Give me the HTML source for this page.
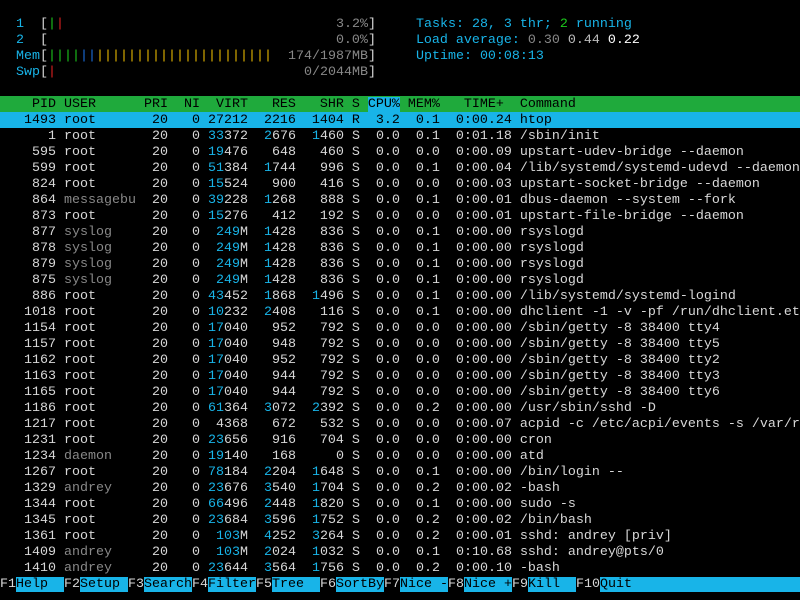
<!DOCTYPE html>
<html><head><meta charset="utf-8"><style>
html,body{margin:0;padding:0;background:#000;width:800px;height:600px;overflow:hidden}
pre{margin:0;font-family:"Liberation Mono","DejaVu Sans Mono",monospace;font-size:13.33px;line-height:16px;color:#d8d8d8;white-space:pre}
.l{height:16px;width:800px;overflow:hidden;padding-top:1px;box-sizing:border-box;line-height:16px}
.c{color:#18b4e8}.g{color:#1cc81c}.r{color:#e02020}.y{color:#e8b800}.b{color:#1a6ee0}.d{color:#888}.w{color:#fff}.m{color:#bdbdbd}
.hd{background:#1faa3c;color:#000}
.hd .s{background:#18b4e8}
.sel{background:#18b4e8;color:#000}
.ft{color:#d8d8d8}.ft span{background:#18b4e8;color:#000}
</style></head><body><pre>
<div class="l"></div><div class="l">  <span class="c">1</span>  [<span class="g">|</span><span class="r">|</span>                                  <span class="d">3.2%</span>]     <span class="c">Tasks: 28, 3 thr; </span><span class="g">2</span><span class="c"> running</span></div><div class="l">  <span class="c">2</span>  [                                    <span class="d">0.0%</span>]     <span class="c">Load average: </span><span class="d">0.30 </span><span class="m">0.44 </span><span class="w">0.22</span></div><div class="l">  <span class="c">Mem</span>[<span class="g">||||</span><span class="b">||</span><span class="y">||||||||||||||||||||||</span>  <span class="d">174/1987MB</span>]     <span class="c">Uptime: 00:08:13</span></div><div class="l">  <span class="c">Swp</span>[<span class="r">|</span>                               <span class="d">0/2044MB</span>]</div><div class="l"></div><div class="l hd">    PID USER      PRI  NI  VIRT   RES   SHR S <span class="s">CPU%</span> MEM%   TIME+  Command                                     </div><div class="l sel">   1493 root       20   0 27212  2216  1404 R  3.2  0.1  0:00.24 htop                                       </div><div class="l">      1 root       20   0 <span class="c">33</span>372  <span class="c">2</span>676  <span class="c">1</span>460 S  0.0  0.1  0:01.18 /sbin/init</div><div class="l">    595 root       20   0 <span class="c">19</span>476   648   460 S  0.0  0.0  0:00.09 upstart-udev-bridge --daemon</div><div class="l">    599 root       20   0 <span class="c">51</span>384  <span class="c">1</span>744   996 S  0.0  0.1  0:00.04 /lib/systemd/systemd-udevd --daemon</div><div class="l">    824 root       20   0 <span class="c">15</span>524   900   416 S  0.0  0.0  0:00.03 upstart-socket-bridge --daemon</div><div class="l">    864 <span class="d">messagebu</span>  20   0 <span class="c">39</span>228  <span class="c">1</span>268   888 S  0.0  0.1  0:00.01 dbus-daemon --system --fork</div><div class="l">    873 root       20   0 <span class="c">15</span>276   412   192 S  0.0  0.0  0:00.01 upstart-file-bridge --daemon</div><div class="l">    877 <span class="d">syslog</span>     20   0  <span class="c">249</span>M  <span class="c">1</span>428   836 S  0.0  0.1  0:00.00 rsyslogd</div><div class="l">    878 <span class="d">syslog</span>     20   0  <span class="c">249</span>M  <span class="c">1</span>428   836 S  0.0  0.1  0:00.00 rsyslogd</div><div class="l">    879 <span class="d">syslog</span>     20   0  <span class="c">249</span>M  <span class="c">1</span>428   836 S  0.0  0.1  0:00.00 rsyslogd</div><div class="l">    875 <span class="d">syslog</span>     20   0  <span class="c">249</span>M  <span class="c">1</span>428   836 S  0.0  0.1  0:00.00 rsyslogd</div><div class="l">    886 root       20   0 <span class="c">43</span>452  <span class="c">1</span>868  <span class="c">1</span>496 S  0.0  0.1  0:00.00 /lib/systemd/systemd-logind</div><div class="l">   1018 root       20   0 <span class="c">10</span>232  <span class="c">2</span>408   116 S  0.0  0.1  0:00.00 dhclient -1 -v -pf /run/dhclient.eth0.pid</div><div class="l">   1154 root       20   0 <span class="c">17</span>040   952   792 S  0.0  0.0  0:00.00 /sbin/getty -8 38400 tty4</div><div class="l">   1157 root       20   0 <span class="c">17</span>040   948   792 S  0.0  0.0  0:00.00 /sbin/getty -8 38400 tty5</div><div class="l">   1162 root       20   0 <span class="c">17</span>040   952   792 S  0.0  0.0  0:00.00 /sbin/getty -8 38400 tty2</div><div class="l">   1163 root       20   0 <span class="c">17</span>040   944   792 S  0.0  0.0  0:00.00 /sbin/getty -8 38400 tty3</div><div class="l">   1165 root       20   0 <span class="c">17</span>040   944   792 S  0.0  0.0  0:00.00 /sbin/getty -8 38400 tty6</div><div class="l">   1186 root       20   0 <span class="c">61</span>364  <span class="c">3</span>072  <span class="c">2</span>392 S  0.0  0.2  0:00.00 /usr/sbin/sshd -D</div><div class="l">   1217 root       20   0  4368   672   532 S  0.0  0.0  0:00.07 acpid -c /etc/acpi/events -s /var/run/acpid.socket</div><div class="l">   1231 root       20   0 <span class="c">23</span>656   916   704 S  0.0  0.0  0:00.00 cron</div><div class="l">   1234 <span class="d">daemon</span>     20   0 <span class="c">19</span>140   168     0 S  0.0  0.0  0:00.00 atd</div><div class="l">   1267 root       20   0 <span class="c">78</span>184  <span class="c">2</span>204  <span class="c">1</span>648 S  0.0  0.1  0:00.00 /bin/login --</div><div class="l">   1329 <span class="d">andrey</span>     20   0 <span class="c">23</span>676  <span class="c">3</span>540  <span class="c">1</span>704 S  0.0  0.2  0:00.02 -bash</div><div class="l">   1344 root       20   0 <span class="c">66</span>496  <span class="c">2</span>448  <span class="c">1</span>820 S  0.0  0.1  0:00.00 sudo -s</div><div class="l">   1345 root       20   0 <span class="c">23</span>684  <span class="c">3</span>596  <span class="c">1</span>752 S  0.0  0.2  0:00.02 /bin/bash</div><div class="l">   1361 root       20   0  <span class="c">103</span>M  <span class="c">4</span>252  <span class="c">3</span>264 S  0.0  0.2  0:00.01 sshd: andrey [priv]</div><div class="l">   1409 <span class="d">andrey</span>     20   0  <span class="c">103</span>M  <span class="c">2</span>024  <span class="c">1</span>032 S  0.0  0.1  0:10.68 sshd: andrey@pts/0</div><div class="l">   1410 <span class="d">andrey</span>     20   0 <span class="c">23</span>644  <span class="c">3</span>564  <span class="c">1</span>756 S  0.0  0.2  0:00.10 -bash</div><div class="l ft">F1<span>Help  </span>F2<span>Setup </span>F3<span>Search</span>F4<span>Filter</span>F5<span>Tree  </span>F6<span>SortBy</span>F7<span>Nice -</span>F8<span>Nice +</span>F9<span>Kill  </span>F10<span>Quit                                        </span></div></pre></body></html>
